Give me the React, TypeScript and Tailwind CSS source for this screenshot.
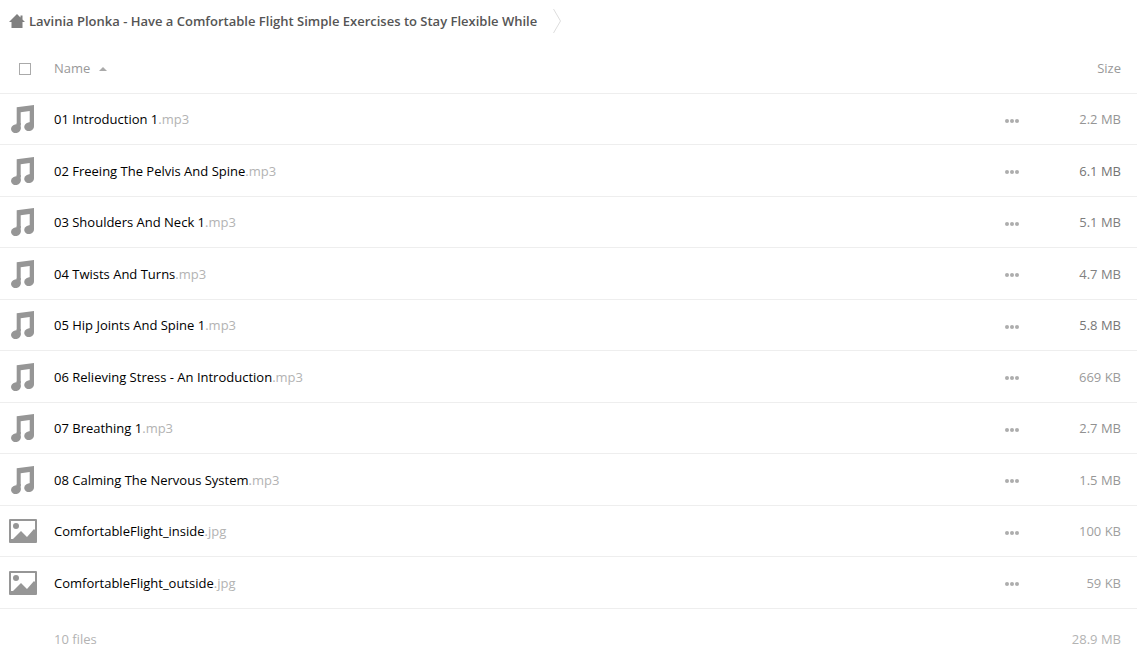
interface FileEntry {
    name: string;
    ext: string;
    size: string;
    kind: 'audio' | 'image';
    sizeColor: string;
}

const files: FileEntry[] = [
    { name: '01 Introduction 1', ext: '.mp3', size: '2.2 MB', kind: 'audio', sizeColor: 'text-[#959595]' },
    { name: '02 Freeing The Pelvis And Spine', ext: '.mp3', size: '6.1 MB', kind: 'audio', sizeColor: 'text-[#747474]' },
    { name: '03 Shoulders And Neck 1', ext: '.mp3', size: '5.1 MB', kind: 'audio', sizeColor: 'text-[#7e7e7e]' },
    { name: '04 Twists And Turns', ext: '.mp3', size: '4.7 MB', kind: 'audio', sizeColor: 'text-[#818181]' },
    { name: '05 Hip Joints And Spine 1', ext: '.mp3', size: '5.8 MB', kind: 'audio', sizeColor: 'text-[#777777]' },
    { name: '06 Relieving Stress - An Introduction', ext: '.mp3', size: '669 KB', kind: 'audio', sizeColor: 'text-[#9b9b9b]' },
    { name: '07 Breathing 1', ext: '.mp3', size: '2.7 MB', kind: 'audio', sizeColor: 'text-[#919191]' },
    { name: '08 Calming The Nervous System', ext: '.mp3', size: '1.5 MB', kind: 'audio', sizeColor: 'text-[#979797]' },
    { name: 'ComfortableFlight_inside', ext: '.jpg', size: '100 KB', kind: 'image', sizeColor: 'text-[#9f9f9f]' },
    { name: 'ComfortableFlight_outside', ext: '.jpg', size: '59 KB', kind: 'image', sizeColor: 'text-[#9f9f9f]' },
];

function HomeIcon() {
    return (
        <svg viewBox="0 0 16 16" className="w-4 h-4" fill="#808080" aria-hidden="true">
            <path d="M8 1 0 9h2.5v6h11V9H16l-2.5-2.5V2.5h-2v2L8 1z" />
        </svg>
    );
}

function AudioIcon() {
    return (
        <svg viewBox="0 0 32 32" className="w-8 h-8" fill="#969696" aria-hidden="true">
            <path d="M27 2 9.7 4.3V22h4V9.300L22.700 8v12H27z" />
            <ellipse cx="8.900" cy="25.700" rx="4.900" ry="4.300" transform="rotate(-12 8.900 25.700)" />
            <path d="M9.700 20h4v5.700h-4zM22.700 19H27v4.800h-4.300z" />
            <ellipse cx="22.100" cy="23.700" rx="4.900" ry="4.300" transform="rotate(-12 22.100 23.700)" />
        </svg>
    );
}

function ImageIcon() {
    return (
        <svg viewBox="0 0 32 32" className="w-8 h-8" fill="#969696" aria-hidden="true">
            <path
                fillRule="evenodd"
                d="M3 4h26a1 1 0 0 1 1 1v22a1 1 0 0 1-1 1H3a1 1 0 0 1-1-1V5a1 1 0 0 1 1-1zM4 6v18h2l8-8 6 6 7-8 1 1V6z"
            />
            <circle cx="9" cy="11" r="3" />
        </svg>
    );
}

function DotsIcon() {
    return (
        <svg viewBox="0 0 16 16" className="w-4 h-4" fill="#adadad" aria-hidden="true">
            <circle cx="3" cy="8" r="2" />
            <circle cx="8" cy="8" r="2" />
            <circle cx="13" cy="8" r="2" />
        </svg>
    );
}

function Breadcrumb() {
    return (
        <nav aria-label="Breadcrumb" className="flex h-11 items-center pl-[9px] pb-0.5">
            <a href="#home" aria-label="Home">
                <HomeIcon />
            </a>
            <a href="#folder" className="ml-1 font-semibold text-[#555555]">
                Lavinia Plonka - Have a Comfortable Flight Simple Exercises to Stay Flexible While
            </a>
            <svg viewBox="0 0 8 24" className="ml-4 w-2 h-6" fill="none" stroke="#dddddd" aria-hidden="true">
                <path d="M.5 0 7.5 12 .5 24" />
            </svg>
        </nav>
    );
}

function FileRow({ file }: { file: FileEntry }) {
    return (
        <tr className="h-[51px] even:h-[52px]">
            <td className="border-b border-[#eeeeee] pl-[7px]">
                {file.kind === 'audio' ? <AudioIcon /> : <ImageIcon />}
            </td>
            <td className="border-b border-[#eeeeee]">
                <a href="#file" className="text-black">
                    {file.name}
                    <span className="text-[#b3b3b3]">{file.ext}</span>
                </a>
            </td>
            <td className="border-b border-[#eeeeee]">
                <button type="button" aria-label="Actions" className="block pt-[3px]">
                    <DotsIcon />
                </button>
            </td>
            <td className={`border-b border-[#eeeeee] pr-4 text-right ${file.sizeColor}`}>{file.size}</td>
        </tr>
    );
}

export default function App() {
    return (
        <main className="bg-white font-['Open_Sans',sans-serif] text-[13px] leading-5">
            <Breadcrumb />
            <table className="w-full table-fixed border-separate border-spacing-0">
                <colgroup>
                    <col className="w-[54px]" />
                    <col />
                    <col className="w-[53px]" />
                    <col className="w-20" />
                </colgroup>
                <thead>
                    <tr className="h-[50px] text-[#999999]">
                        <th className="border-b border-[#eeeeee] pl-[19px]">
                            <input
                                type="checkbox"
                                aria-label="Select all"
                                className="block size-3 appearance-none border border-[#aaaaaa] bg-white checked:bg-[#aaaaaa]"
                            />
                        </th>
                        <th className="border-b border-[#eeeeee] pb-0.5 text-left font-normal">
                            <button type="button" className="flex items-center gap-2">
                                Name
                                <svg viewBox="0 0 10 6" className="w-[10px] h-[6px]" fill="#aaaaaa" aria-hidden="true">
                                    <path d="M5 2 9 6H1z" />
                                </svg>
                            </button>
                        </th>
                        <th className="border-b border-[#eeeeee]" />
                        <th className="border-b border-[#eeeeee] pb-0.5 pr-4 text-right font-normal">
                            <button type="button">Size</button>
                        </th>
                    </tr>
                </thead>
                <tbody>
                    {files.map((file) => (
                        <FileRow key={file.name} file={file} />
                    ))}
                </tbody>
                <tfoot>
                    <tr className="h-[60px] text-[#b3b3b3]">
                        <td />
                        <td>10 files</td>
                        <td />
                        <td className="pr-4 text-right">28.9 MB</td>
                    </tr>
                </tfoot>
            </table>
        </main>
    );
}
